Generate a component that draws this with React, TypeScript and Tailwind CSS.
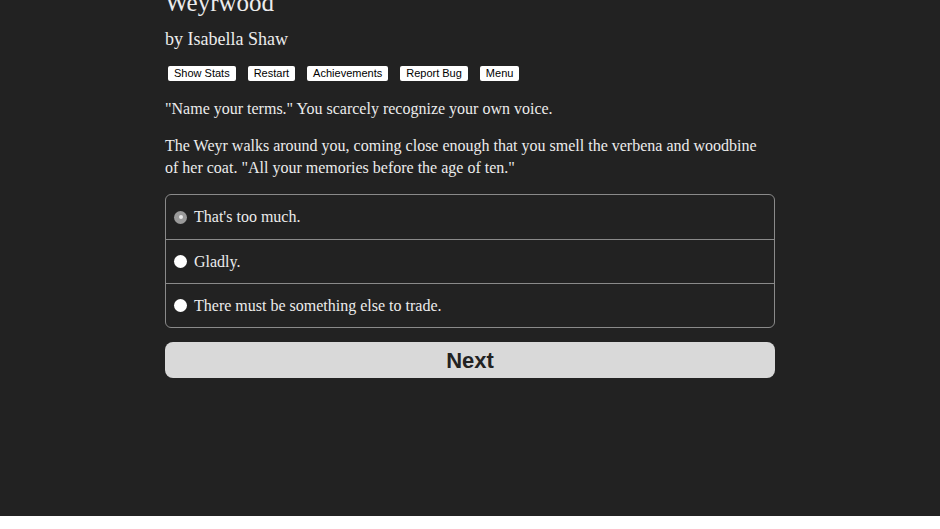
const serif = { fontFamily: '"Liberation Serif", "Times New Roman", serif' };

const tools = ["Show Stats", "Restart", "Achievements", "Report Bug", "Menu"];

const options = [
  { label: "That's too much.", selected: true },
  { label: "Gladly.", selected: false },
  { label: "There must be something else to trade.", selected: false },
];

function Radio({ selected }: { selected: boolean }) {
  if (selected) {
    return (
      <span className="flex h-[13px] w-[13px] shrink-0 items-center justify-center rounded-full bg-[#9a9a9a]">
        <span className="h-[4px] w-[4px] rounded-full bg-[#e8e8e8]" />
      </span>
    );
  }
  return <span className="h-[13px] w-[13px] shrink-0 rounded-full bg-white" />;
}

export default function App() {
  return (
    <div className="min-h-[529px] w-full bg-[#222222] text-[#ececec]">
      <div className="mx-auto w-[610px]" style={serif}>
        <h1 className="-mt-[13px] text-[25px] leading-[32px]">Weyrwood</h1>
        <h2 className="mt-[9px] text-[18px] leading-[22px]">by Isabella Shaw</h2>

        <div className="mt-[16px] flex gap-[12px] pl-[3px]">
          {tools.map((t) => (
            <button
              key={t}
              className="h-[15px] rounded-[2px] bg-white px-[6px] text-[11px] leading-[15px] text-black"
              style={{ fontFamily: '"Liberation Sans", Arial, sans-serif' }}
            >
              {t}
            </button>
          ))}
        </div>

        <p className="mt-[17px] text-[16px] leading-[22px]">
          "Name your terms." You scarcely recognize your own voice.
        </p>
        <p className="mt-[15px] pr-[14px] text-[16px] leading-[22px]">
          The Weyr walks around you, coming close enough that you smell the verbena and woodbine
          of her coat. "All your memories before the age of ten."
        </p>

        <div className="mt-[15px] overflow-hidden rounded-[6px] border border-[#8a8a8a]">
          {options.map((o, i) => (
            <label
              key={o.label}
              className={`flex h-[44px] items-center gap-[7px] pl-[8px] text-[16px] ${
                i > 0 ? "border-t border-[#8a8a8a]" : ""
              }`}
            >
              <Radio selected={o.selected} />
              <span>{o.label}</span>
            </label>
          ))}
        </div>

        <button
          className="mt-[14px] h-[36px] w-full rounded-[8px] bg-[#d9d9d9] text-[22px] font-bold text-[#222]"
          style={{ fontFamily: '"Liberation Sans", Arial, sans-serif' }}
        >
          Next
        </button>
      </div>
    </div>
  );
}
